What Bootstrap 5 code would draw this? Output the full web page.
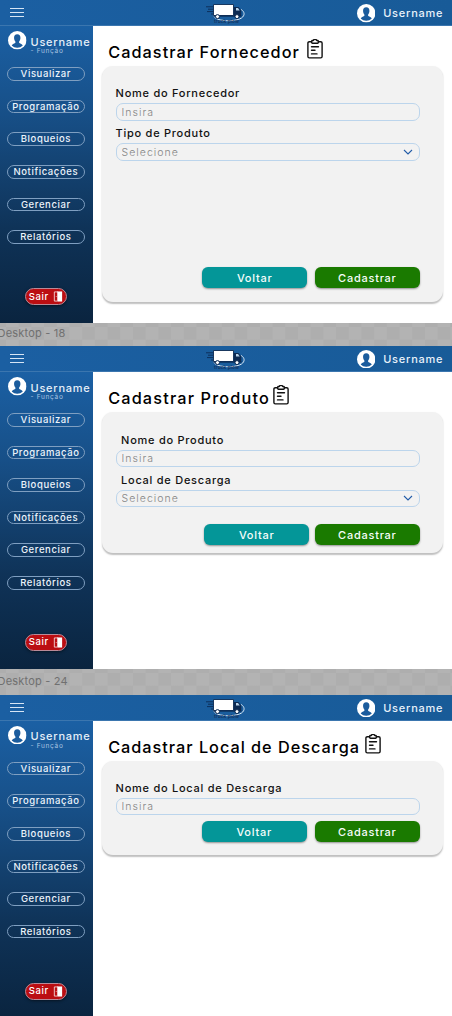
<!DOCTYPE html>
<html lang="pt-BR">
<head>
<meta charset="utf-8">
<meta name="viewport" content="width=device-width, initial-scale=1">
<title>Truck Plow - Cadastros</title>
<link href="https://cdn.jsdelivr.net/npm/bootstrap@5.3.0/dist/css/bootstrap.min.css" rel="stylesheet">
<style>
  body { font-family: Inter, "Open Sans", sans-serif; background: #fff; color: #000; width: 452px; height: 1016px; line-height: 1; overflow: hidden; }
  .screen { height: 323.4px; }
  .screen-body { height: 297px; }
  .topbar { height: 26.4px; background: linear-gradient(90deg, #1b5fa2, #185b98); color: #e9f2fb; padding: 1.5px 9.5px 0 10px; border-bottom: 1px solid #3b76af; }
  .topbar-side { width: 110px; }
  .user-name { font-size: 11px; letter-spacing: .75px; font-weight: 500; margin-right: -.75px; }
  .side { width: 93.2px; background: linear-gradient(180deg, #1b60a4 0%, #174f87 30%, #0f3358 68%, #0a243f 100%); color: #e6eff8; padding-top: 5px; }
  .side-user { height: 27px; padding-left: 8px; gap: 4px; }
  .side-user-text { padding-top: 5.5px; }
  .side-role { font-size: 6.5px; letter-spacing: .7px; color: #a9c5e2; margin-top: .5px; }
  .side-nav { gap: 19.1px; padding: 8.9px 8px 0 6.5px; }
  .side-pill { height: 13.5px; border: 1px solid #7f9fc1; font-size: 9.5px; font-weight: 500; letter-spacing: .6px; color: #edf4fb; padding: 0; line-height: 1; white-space: nowrap; }
  .exit-pill { width: 42px; height: 17px; margin: 44.2px 0 0 24.7px; background: #bb0e12; border: 1px solid #b98a98; color: #fff; font-size: 9.5px; font-weight: 500; letter-spacing: .6px; line-height: 1; box-shadow: 0 1px 3px rgba(0,0,0,.5); gap: 4px; padding: 0; }
  .main-area { padding: 13px 9.3px 0 9.3px; }
  .page-title { height: 27px; font-size: 16.3px; font-weight: 500; letter-spacing: 1.05px; margin: 0; padding-left: 5.7px; line-height: 1; white-space: nowrap; gap: 7px; }
  .page-title span { padding-top: 4.7px; }
  .gap-narrow { gap: 3.5px; letter-spacing: 1.15px; }
  .gap-mid { gap: 4.5px; letter-spacing: .98px; }
  .form-panel { background: #f2f2f2; border-radius: 11px; box-shadow: 0 1.5px 1.5px rgba(0,0,0,.25); padding: 21px 23px 0 13.1px; }
  .panel-a { height: 235.5px; padding-bottom: 13.5px; }
  .panel-b { height: 141px; padding-top: 21.6px; padding-bottom: 7.8px; }
  .panel-c { height: 94px; padding-bottom: 12.6px; }
  .acts-a { gap: 8px; }
  .acts-b { gap: 6px; }
  .acts-c { gap: 8.5px; }
  .field-label { display: block; height: 16px; line-height: 13px; font-size: 11px; font-weight: 500; letter-spacing: .74px; color: #111; margin: 0; white-space: nowrap; }
  .label-inset { padding-left: 5.5px; }
  .field-box, .field-box:focus { height: 17.4px; min-height: 0; padding: 0 5px; border: 1px solid #bcd5ec; border-radius: 7px; background-color: transparent; font-size: 10.5px; font-weight: 300; letter-spacing: 1.02px; line-height: 15px; color: #858585; }
  .field-box::placeholder { color: #858585; opacity: 1; }
  .chevron-box { background-image: url("data:image/svg+xml,%3Csvg xmlns='http://www.w3.org/2000/svg' viewBox='0 0 10 6'%3E%3Cpath d='M1 1l4 4 4-4' fill='none' stroke='%23245da8' stroke-width='1.1'/%3E%3C/svg%3E"); background-size: 10px 6px; background-position: right 5.5px center; }
  .field-gap { margin-bottom: 6.6px; }
  .act { width: 104.7px; height: 21.5px; border: 0; border-radius: 6px; font-size: 11px; font-weight: 500; letter-spacing: .75px; line-height: 1; color: #f6fdfb; padding: 1px 0 0; box-shadow: 0 1px 2px rgba(0,0,0,.4); }
  .act-back { background: #049698; }
  .act-save { background: #1a7a00; }
  .canvas-strip { font-size: 11px; letter-spacing: .2px; color: #707070; background: repeating-conic-gradient(#b3b3b3 0 25%, #aeaeae 0 50%) 6px 4px / 25.4px 25.4px; white-space: nowrap; }
  .canvas-strip span { margin-left: -2.5px; }
  .strip-a { height: 22.4px; padding-bottom: 3px; }
  .strip-b { height: 25.4px; }
</style>
</head>
<body>

<svg width="0" height="0" class="position-absolute" aria-hidden="true">
  <symbol id="i-user" viewBox="0 0 18 18">
    <circle cx="9" cy="9" r="9" fill="#fff"/>
    <path d="M9 3.200c-2.100 0-3.200 1.500-3.100 3.500.1 1.600.6 2.600 1.300 3.500v1.300c-.5.9-2.900 1-3.600 2.500A7.300 7.300 0 0 0 9 16.200a7.300 7.300 0 0 0 5.400-2.200c-.7-1.500-3.100-1.600-3.600-2.500v-1.300c.7-.9 1.200-1.900 1.300-3.500C12.200 4.700 11.100 3.200 9 3.200z" fill="#1b5c9d"/>
  </symbol>
  <symbol id="i-clip" viewBox="0 0 16 20">
    <g fill="none" stroke="#111" stroke-width="1.400" stroke-linejoin="round" stroke-linecap="round">
      <path d="M4.500 2.700H2.300a1.400 1.400 0 0 0-1.400 1.400v13.400a1.400 1.400 0 0 0 1.400 1.400h11.400a1.400 1.400 0 0 0 1.400-1.400V4.100a1.400 1.400 0 0 0-1.400-1.400h-2.200"/>
      <path d="M4.700 2.200c0-.4.300-.7.700-.7h.9a1.800 1.800 0 0 1 3.400 0h.9c.4 0 .7.300.7.700v1.300c0 .4-.3.700-.7.700H5.400a.7.700 0 0 1-.7-.7z"/>
      <path d="M4.500 7.700h7M4.500 11.300h3.500M4.500 14.900h5.500"/>
    </g>
  </symbol>
  <symbol id="i-door" viewBox="0 0 10 12">
    <path d="M5 1H1v10h3" fill="none" stroke="#fff" stroke-width=".8"/>
    <path d="M4.200.5h5.300v11H4.200z" fill="#fff"/>
    <circle cx="3" cy="6" r=".5" fill="#fff"/>
  </symbol>
</svg>

<template id="tpl-top">
  <div class="topbar-side"><svg class="d-block" width="14" height="10" viewBox="0 0 14 10"><path d="M0 .500h14M0 4.500h14M0 8.500h14" stroke="#d6e5f5" stroke-width="1"/></svg></div>
  <svg width="40" height="21" viewBox="0 0 40 21">
    <path d="M9.500 9C6.500 11 7 14.500 12 16.300c7 2.300 19 1.700 23.500-1.300 3.800-2.600 3.200-6.500-.5-8.500" fill="none" stroke="#d9e8f5" stroke-width="1"/>
    <path d="M0 3.800h8M2 6.200h6M1 8.600h7M5 11h3" stroke="#0c2a52" stroke-width=".9"/>
    <path d="M7.500 1.500h20v11h-20z" fill="#fff" stroke="#0c2a52" stroke-width=".9"/>
    <path d="M28 4h4.500l2.800 3.600v5.400H28z" fill="#0c2a52"/>
    <path d="M30 5h2l1.700 2.500H30z" fill="#b9d2e8"/>
    <path d="M7.500 13h28" stroke="#0c2a52" stroke-width="1.300"/>
    <circle cx="11.500" cy="13.600" r="2" fill="#fff" stroke="#0c2a52"/>
    <circle cx="31" cy="13.600" r="2" fill="#fff" stroke="#0c2a52"/>
    <text x="8" y="19.500" font-family="Inter, sans-serif" font-size="4.800" font-weight="600" textLength="25" fill="#12335f">truck plow</text>
  </svg>
  <div class="topbar-side d-flex align-items-center justify-content-end"><svg class="me-2" width="18.500" height="18.500"><use href="#i-user"/></svg><span class="user-name">Username</span></div>
</template>

<template id="tpl-side">
  <div class="side-user d-flex">
    <svg class="flex-shrink-0" width="18.500" height="18.500"><use href="#i-user"/></svg>
    <div class="side-user-text"><div class="user-name">Username</div><div class="side-role">- Função</div></div>
  </div>
  <nav class="side-nav d-flex flex-column"></nav>
  <button class="exit-pill rounded-pill d-flex align-items-center justify-content-center">Sair<svg width="10" height="11"><use href="#i-door"/></svg></button>
</template>

<section class="screen">
  <header class="topbar d-flex align-items-center justify-content-between"></header>
  <div class="screen-body d-flex">
    <aside class="side flex-shrink-0"></aside>
    <main class="main-area flex-grow-1">
      <h1 class="page-title d-flex"><span>Cadastrar Fornecedor</span><svg width="16" height="20"><use href="#i-clip"/></svg></h1>
      <form class="form-panel panel-a d-flex flex-column">
        <label class="field-label">Nome do Fornecedor</label>
        <input class="form-control field-box field-gap" placeholder="Insira">
        <label class="field-label">Tipo de Produto</label>
        <select class="form-select field-box chevron-box"><option>Selecione</option></select>
        <div class="acts-a d-flex justify-content-end mt-auto"><button type="button" class="btn act act-back">Voltar</button><button type="button" class="btn act act-save">Cadastrar</button></div>
      </form>
    </main>
  </div>
</section>

<div class="canvas-strip strip-a d-flex align-items-center"><span>Desktop - 18</span></div>

<section class="screen">
  <header class="topbar d-flex align-items-center justify-content-between"></header>
  <div class="screen-body d-flex">
    <aside class="side flex-shrink-0"></aside>
    <main class="main-area flex-grow-1">
      <h1 class="page-title gap-narrow d-flex"><span>Cadastrar Produto</span><svg width="16" height="20"><use href="#i-clip"/></svg></h1>
      <form class="form-panel panel-b d-flex flex-column">
        <label class="field-label label-inset">Nome do Produto</label>
        <input class="form-control field-box field-gap" placeholder="Insira">
        <label class="field-label label-inset">Local de Descarga</label>
        <select class="form-select field-box chevron-box"><option>Selecione</option></select>
        <div class="acts-b d-flex justify-content-end mt-auto"><button type="button" class="btn act act-back">Voltar</button><button type="button" class="btn act act-save">Cadastrar</button></div>
      </form>
    </main>
  </div>
</section>

<div class="canvas-strip strip-b d-flex align-items-center"><span>Desktop - 24</span></div>

<section class="screen">
  <header class="topbar d-flex align-items-center justify-content-between"></header>
  <div class="screen-body d-flex">
    <aside class="side flex-shrink-0"></aside>
    <main class="main-area flex-grow-1">
      <h1 class="page-title gap-mid d-flex"><span>Cadastrar Local de Descarga</span><svg width="16" height="20"><use href="#i-clip"/></svg></h1>
      <form class="form-panel panel-c d-flex flex-column">
        <label class="field-label">Nome do Local de Descarga</label>
        <input class="form-control field-box" placeholder="Insira">
        <div class="acts-c d-flex justify-content-end mt-auto"><button type="button" class="btn act act-back">Voltar</button><button type="button" class="btn act act-save">Cadastrar</button></div>
      </form>
    </main>
  </div>
</section>

<script src="https://cdn.jsdelivr.net/npm/bootstrap@5.3.0/dist/js/bootstrap.bundle.min.js"></script>
<script>
  const items = ['Visualizar', 'Programação', 'Bloqueios', 'Notificações', 'Gerenciar', 'Relatórios'];
  document.querySelectorAll('.topbar').forEach(el => el.append(document.getElementById('tpl-top').content.cloneNode(true)));
  document.querySelectorAll('.side').forEach(el => {
    el.append(document.getElementById('tpl-side').content.cloneNode(true));
    el.querySelector('.side-nav').innerHTML = items.map(t => `<a class="side-pill rounded-pill d-flex align-items-center justify-content-center text-decoration-none">${t}</a>`).join('');
  });
</script>
</body>
</html>
